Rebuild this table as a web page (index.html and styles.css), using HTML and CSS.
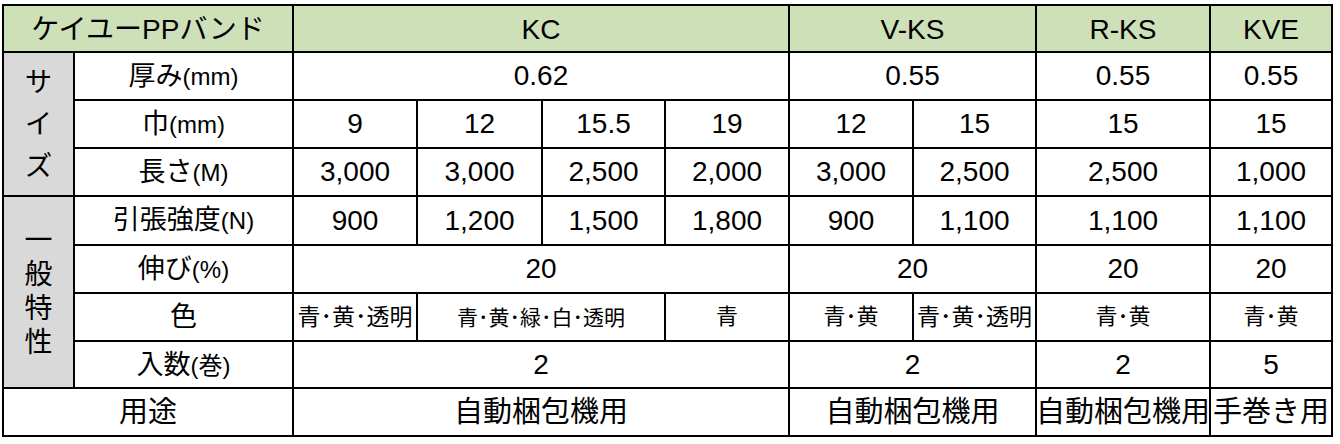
FILE: index.html
```html
<!DOCTYPE html>
<html lang="ja">
<head>
<meta charset="utf-8">
<title>ケイユーPPバンド</title>
<link rel="stylesheet" href="styles.css">
</head>
<body>
<div class="sheet">
  <div class="cell head span-2">ケイユーPPバンド</div>
  <div class="cell head span-4">KC</div>
  <div class="cell head span-2">V-KS</div>
  <div class="cell head">R-KS</div>
  <div class="cell head">KVE</div>

  <div class="cell side side-size"><span class="vtext">サイズ</span></div>
  <div class="cell label">厚み<span class="unit">(mm)</span></div>
  <div class="cell span-4">0.62</div>
  <div class="cell span-2">0.55</div>
  <div class="cell">0.55</div>
  <div class="cell">0.55</div>

  <div class="cell label">巾<span class="unit">(mm)</span></div>
  <div class="cell">9</div>
  <div class="cell">12</div>
  <div class="cell">15.5</div>
  <div class="cell">19</div>
  <div class="cell">12</div>
  <div class="cell">15</div>
  <div class="cell">15</div>
  <div class="cell">15</div>

  <div class="cell label">長さ<span class="unit">(M)</span></div>
  <div class="cell">3,000</div>
  <div class="cell">3,000</div>
  <div class="cell">2,500</div>
  <div class="cell">2,000</div>
  <div class="cell">3,000</div>
  <div class="cell">2,500</div>
  <div class="cell">2,500</div>
  <div class="cell">1,000</div>

  <div class="cell side side-general"><span class="vtext">一般特性</span></div>
  <div class="cell label">引張強度<span class="unit">(N)</span></div>
  <div class="cell">900</div>
  <div class="cell">1,200</div>
  <div class="cell">1,500</div>
  <div class="cell">1,800</div>
  <div class="cell">900</div>
  <div class="cell">1,100</div>
  <div class="cell">1,100</div>
  <div class="cell">1,100</div>

  <div class="cell label">伸び<span class="unit">(%)</span></div>
  <div class="cell span-4">20</div>
  <div class="cell span-2">20</div>
  <div class="cell">20</div>
  <div class="cell">20</div>

  <div class="cell label">色</div>
  <div class="cell color fill">青･黄･透明</div>
  <div class="cell color span-2 color-sm">青･黄･緑･白･透明</div>
  <div class="cell color">青</div>
  <div class="cell color">青･黄</div>
  <div class="cell color fill">青･黄･透明</div>
  <div class="cell color">青･黄</div>
  <div class="cell color">青･黄</div>

  <div class="cell label">入数<span class="unit">(巻)</span></div>
  <div class="cell span-4">2</div>
  <div class="cell span-2">2</div>
  <div class="cell">2</div>
  <div class="cell">5</div>

  <div class="cell use span-2">用途</div>
  <div class="cell use span-4">自動梱包機用</div>
  <div class="cell use span-2">自動梱包機用</div>
  <div class="cell use">自動梱包機用</div>
  <div class="cell use">手巻き用</div>
</div>
</body>
</html>
```

FILE: styles.css
```css
html, body {
  margin: 0;
  padding: 0;
  background: #ffffff;
}

body {
  font-family: "Liberation Sans", "Noto Sans CJK JP", sans-serif;
  color: #000000;
}

.sheet {
  display: grid;
  grid-template-columns: 69px 217px 122px 123px 121px 122px 122px 121px 172px 120px;
  grid-template-rows: 45px 46px 46px 46px 47px 46px 46px 45px 46px;
  gap: 2px;
  padding: 2px;
  width: max-content;
  margin: 4px 0 0 2px;
  background: #000000;
}

.cell {
  display: flex;
  align-items: center;
  justify-content: center;
  background: #ffffff;
  font-size: 28px;
  line-height: 1;
  white-space: nowrap;
  overflow: hidden;
}

.span-2 { grid-column: span 2; }
.span-4 { grid-column: span 4; }

.head {
  background: #cde0b8;
  padding-top: 3px;
}

.label {
  font-size: 27px;
  align-items: baseline;
  padding-top: 10px;
}

.unit {
  font-size: 24px;
}

.side {
  background: #d9d9d9;
  font-family: "Noto Sans CJK JP", sans-serif;
  font-size: 28px;
}

.vtext {
  writing-mode: vertical-rl;
  text-orientation: upright;
  line-height: 1;
}

.side-size {
  grid-row: span 3;
  padding-top: 12px;
}

.side-size .vtext {
  letter-spacing: 14px;
}

.side-general {
  grid-row: span 4;
  padding-top: 2px;
}

.side-general .vtext {
  letter-spacing: 6px;
}

.color {
  font-size: 22px;
}

.color.fill {
  font-size: 23px;
}

.color-sm {
  font-size: 21px;
}

.use {
  font-size: 29px;
}
```
